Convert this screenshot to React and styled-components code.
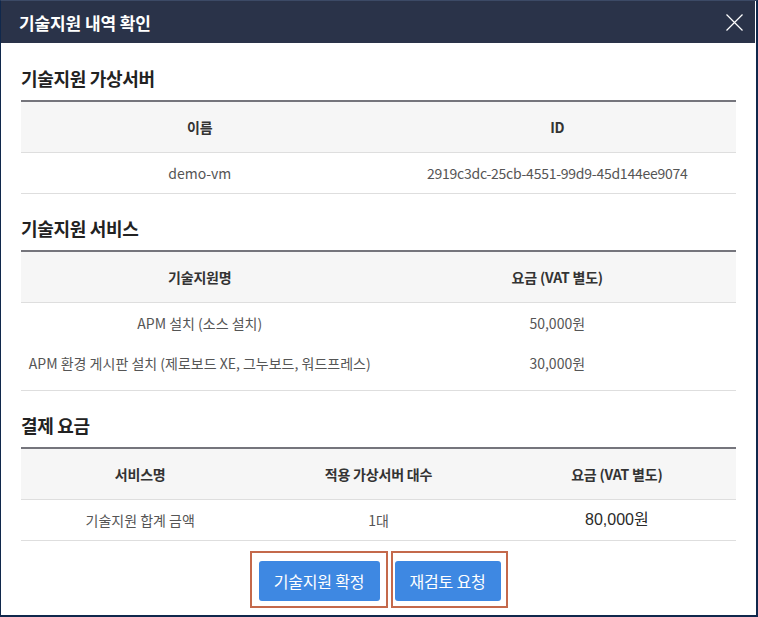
import React from 'react'
import styled, { createGlobalStyle } from 'styled-components'

const GlobalStyle = createGlobalStyle`
  html, body {
    margin: 0;
    padding: 0;
    background: #ffffff;
  }
  body {
    font-family: 'Noto Sans CJK KR', 'Noto Sans', sans-serif;
  }
  * {
    box-sizing: border-box;
  }
`

const Frame = styled.div`
  width: 758px;
  height: 617px;
  border-top: 1px solid #3c4a66;
  border-left: 1px solid #10284c;
  border-right: 2px solid #10284c;
  border-bottom: 2px solid #10284c;
  background: #ffffff;
  overflow: hidden;
`

const Dialog = styled.div`
  margin-right: 1px;
  display: flex;
  flex-direction: column;
`

const Header = styled.div`
  height: 42px;
  background: #2a3349;
  display: flex;
  align-items: center;
  justify-content: space-between;
  padding: 0 12px 0 18px;
`

const Title = styled.h1`
  margin: 0;
  font-size: 17px;
  font-weight: 700;
  color: #ffffff;
  letter-spacing: -0.1px;
`

const CloseButton = styled.button`
  border: 0;
  background: none;
  padding: 0;
  width: 18px;
  height: 18px;
  display: flex;
  align-items: center;
  justify-content: center;
  cursor: pointer;
`

const Body = styled.div`
  padding: 0 19px 0 20px;
  display: flex;
  flex-direction: column;
`

const Section = styled.section`
  margin-top: ${({ $first }) => ($first ? '23px' : '22px')};
`

const SectionTitle = styled.h2`
  margin: 0 0 10px;
  font-size: 18px;
  line-height: 24px;
  font-weight: 700;
  color: #222222;
  letter-spacing: -0.3px;
`

const Table = styled.table`
  width: 100%;
  border-collapse: collapse;
  table-layout: fixed;
  border-top: 2px solid #75757c;

  tbody tr:last-child td {
    padding-bottom: ${({ $tail }) => 10 + ($tail || 0)}px;
    border-bottom: 1px solid #dedede;
  }
`

const HeadCell = styled.th`
  padding: 15px 0;
  line-height: 20px;
  background: #f6f6f6;
  border-bottom: 1px solid #dedede;
  font-size: 14px;
  font-weight: 700;
  color: #333333;
  text-align: center;
  letter-spacing: -0.2px;
`

const Cell = styled.td`
  padding: 10px 0;
  line-height: 20px;
  font-family: ${({ $alt }) =>
    $alt ? "'Liberation Sans', 'Noto Sans CJK KR', sans-serif" : 'inherit'};
  font-size: ${({ $alt }) => ($alt ? '16px' : '14px')};
  color: ${({ $alt }) => ($alt ? '#2a2a2a' : '#555555')};
  letter-spacing: ${({ $tight }) => ($tight ? '-0.25px' : '0')};
  text-align: center;
  vertical-align: middle;
`

const Actions = styled.div`
  display: flex;
  justify-content: center;
  gap: 3px;
  margin-top: 10px;
`

const Highlight = styled.div`
  border: 2px solid #c4694b;
  padding: ${({ $pad }) => $pad};
`

const ActionButton = styled.button`
  width: ${({ $w }) => $w}px;
  height: 40px;
  padding: 0;
  border: 0;
  border-radius: 3px;
  background: #3e88e2;
  color: #ffffff;
  font-family: 'Noto Sans CJK KR', 'Noto Sans', sans-serif;
  font-size: 16px;
  letter-spacing: -0.2px;
  cursor: pointer;
  display: block;
`

const CloseIcon = () => (
  <svg width='17' height='17' viewBox='0 0 17 17'>
    <path d='M0.5 0.5 L16.5 16.5 M16.5 0.5 L0.5 16.5' stroke='#ffffff' strokeWidth='1.2' fill='none' />
  </svg>
)

const services = [
  { name: 'APM 설치 (소스 설치)', price: '50,000원' },
  { name: 'APM 환경 게시판 설치 (제로보드 XE, 그누보드, 워드프레스)', price: '30,000원' },
]

const App = () => (
  <>
    <GlobalStyle />
    <Frame>
      <Dialog>
        <Header>
          <Title>기술지원 내역 확인</Title>
          <CloseButton aria-label='닫기'>
            <CloseIcon />
          </CloseButton>
        </Header>
        <Body>
          <Section $first>
            <SectionTitle>기술지원 가상서버</SectionTitle>
            <Table>
              <thead>
                <tr>
                  <HeadCell>이름</HeadCell>
                  <HeadCell>ID</HeadCell>
                </tr>
              </thead>
              <tbody>
                <tr>
                  <Cell>demo-vm</Cell>
                  <Cell $tight>2919c3dc-25cb-4551-99d9-45d144ee9074</Cell>
                </tr>
              </tbody>
            </Table>
          </Section>

          <Section>
            <SectionTitle>기술지원 서비스</SectionTitle>
            <Table $tail={7}>
              <thead>
                <tr>
                  <HeadCell>기술지원명</HeadCell>
                  <HeadCell>요금 (VAT 별도)</HeadCell>
                </tr>
              </thead>
              <tbody>
                {services.map((s) => (
                  <tr key={s.name}>
                    <Cell>{s.name}</Cell>
                    <Cell>{s.price}</Cell>
                  </tr>
                ))}
              </tbody>
            </Table>
          </Section>

          <Section>
            <SectionTitle>결제 요금</SectionTitle>
            <Table>
              <thead>
                <tr>
                  <HeadCell>서비스명</HeadCell>
                  <HeadCell>적용 가상서버 대수</HeadCell>
                  <HeadCell>요금 (VAT 별도)</HeadCell>
                </tr>
              </thead>
              <tbody>
                <tr>
                  <Cell>기술지원 합계 금액</Cell>
                  <Cell>1대</Cell>
                  <Cell $alt>80,000원</Cell>
                </tr>
              </tbody>
            </Table>
          </Section>

          <Actions>
            <Highlight $pad='8px 6px 5px 7px'>
              <ActionButton $w={121}>기술지원 확정</ActionButton>
            </Highlight>
            <Highlight $pad='8px 5px 5px 2px'>
              <ActionButton $w={106}>재검토 요청</ActionButton>
            </Highlight>
          </Actions>
        </Body>
      </Dialog>
    </Frame>
  </>
)

export default App
